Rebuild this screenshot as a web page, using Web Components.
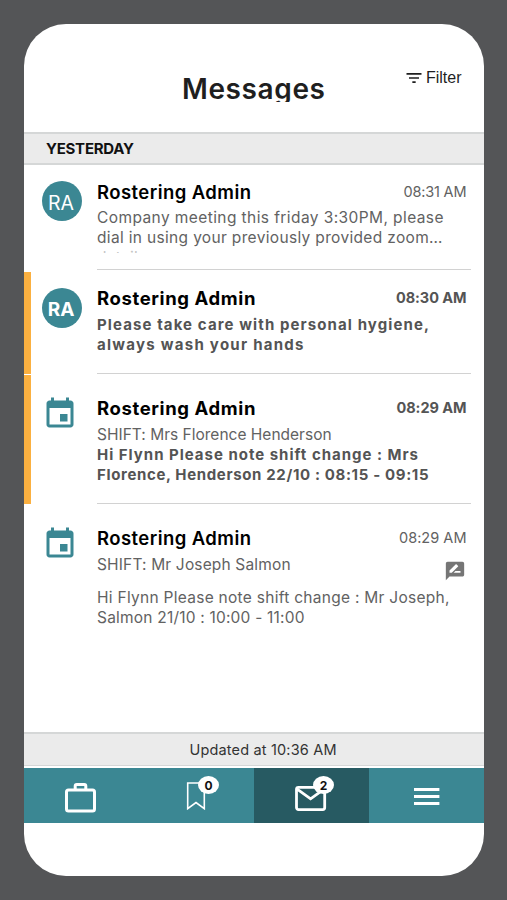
<!DOCTYPE html>
<html lang="en">
<head>
<meta charset="utf-8">
<title>Messages</title>
<style>
  body {
    margin: 0;
    background: #545557;
    font-family: Inter, Roboto, sans-serif;
    color: #626262;
  }
</style>
</head>
<body>
<message-app></message-app>

<script>
// One line of text, tracked so that it spans the given width.
class TextLine extends HTMLElement {
  constructor() {
    super();
    this.attachShadow({ mode: 'open' });
    this.shadowRoot.innerHTML = `
      <style>
        :host { display: block; white-space: nowrap; }
        span { display: inline-block; }
      </style>
      <span><slot></slot></span>
    `;
  }

  connectedCallback() {
    requestAnimationFrame(() => this.fit());
    this.fit();
  }

  fit() {
    const target = Number(this.getAttribute('width'));
    const span = this.shadowRoot.querySelector('span');
    const count = this.textContent.length;
    if (!target || !count) return;
    span.style.letterSpacing = '0px';
    const natural = span.getBoundingClientRect().width;
    const spacing = (target - natural) / (count - 1);
    span.style.letterSpacing = `${spacing.toFixed(3)}px`;
    span.style.marginRight = `${(-spacing).toFixed(3)}px`;
  }
}

// Round initials avatar
class UserAvatar extends HTMLElement {
  constructor() {
    super();
    this.attachShadow({ mode: 'open' });
    this.shadowRoot.innerHTML = `
      <style>
        :host {
          display: flex;
          align-items: center;
          justify-content: center;
          box-sizing: border-box;
          width: 40px;
          height: 40px;
          padding: 4px 1px 0 0;
          border-radius: 50%;
          background: #3b8793;
          color: #fff;
          font-size: 19.5px;
          line-height: 24px;
        }
        :host([bold]) { font-weight: 700; font-size: 19px; }
      </style>
      <slot></slot>
    `;
  }
}

class CalendarIcon extends HTMLElement {
  constructor() {
    super();
    this.attachShadow({ mode: 'open' });
    this.shadowRoot.innerHTML = `
      <style>
        :host { display: block; height: 36px; }
        svg { display: block; fill: #3b8793; }
      </style>
      <svg width="36" height="36" viewBox="0 0 24 24">
        <path d="M17 12h-5v5h5v-5zM16 1v2H8V1H6v2H5c-1.11 0-1.99.9-1.99 2L3 19c0 1.1.89 2 2 2h14c1.1 0 2-.9 2-2V5c0-1.1-.9-2-2-2h-1V1h-2zm3 18H5V8h14v11z"/>
      </svg>
    `;
  }
}

class AppHeader extends HTMLElement {
  constructor() {
    super();
    this.attachShadow({ mode: 'open' });
    this.shadowRoot.innerHTML = `
      <style>
        :host {
          display: grid;
          grid-template-columns: 158px 1fr 142px;
          height: 107.5px;
          color: #1f1f1f;
        }
        .title {
          grid-column: 2;
          margin-top: 49px;
          height: 28.5px;
          overflow: hidden;
          font-size: 28px;
          font-weight: 600;
          line-height: 32px;
        }
        .filter {
          display: flex;
          align-items: center;
          gap: 2.5px;
          height: 20px;
          margin: 44px 0 0 61.5px;
          font: 16px/20px "Liberation Sans", Arial, sans-serif;
        }
        svg { fill: #1f1f1f; }
      </style>
      <div class="title"><text-line width="143">Messages</text-line></div>
      <div class="filter">
        <svg width="20" height="20" viewBox="0 0 24 24"><path d="M10 18h4v-2h-4v2zM3 6v2h18V6H3zm3 7h12v-2H6v2z"/></svg>
        <text-line width="35.5">Filter</text-line>
      </div>
    `;
  }
}

// Grey strip with a border above and below
class InfoBar extends HTMLElement {
  constructor() {
    super();
    this.attachShadow({ mode: 'open' });
    this.shadowRoot.innerHTML = `
      <style>
        :host {
          display: flex;
          align-items: center;
          box-sizing: border-box;
          height: 34px;
          border-top: 2px solid #d5d7d7;
          border-bottom: 2px solid #d5d7d7;
          background: #ebebeb;
          color: #333;
        }
      </style>
      <slot></slot>
    `;
  }
}

class MessageRow extends HTMLElement {
  constructor() {
    super();
    this.attachShadow({ mode: 'open' });
    this.shadowRoot.innerHTML = `
      <style>
        :host {
          display: grid;
          grid-template-columns: 6.5px 66.5px 374px;
          color: #626262;
        }
        :host([unread]) .mark { background: #fbb040; }
        :host([unread]) .time { font-weight: 700; color: #545454; }
        :host([unread]) .name { font-weight: 700; }
        .lead { padding: var(--lead-top, 16px) 0 0 11px; }
        .content {
          box-sizing: border-box;
          padding-top: var(--text-top, 13px);
          border-bottom: 1.5px solid #d2d2d2;
          margin-bottom: var(--line-gap, 0);
        }
        :host([last]) .content { border: 0; }
        .top {
          display: flex;
          justify-content: space-between;
          height: 26px;
          padding-right: 4.5px;
          margin-bottom: var(--name-gap, 4px);
          line-height: 26px;
        }
        .name { font-size: 18.5px; font-weight: 600; color: #000; }
        .time { font-size: 14.5px; }
        .text { font-size: 15.5px; line-height: 20px; }
      </style>
      <div class="mark"></div>
      <div class="lead"><slot name="lead"></slot></div>
      <div class="content">
        <div class="top">
          <div class="name"><slot name="name"></slot></div>
          <div class="time"><slot name="time"></slot></div>
        </div>
        <div class="text"><slot></slot></div>
      </div>
    `;
  }
}

class NavTab extends HTMLElement {
  constructor() {
    super();
    this.attachShadow({ mode: 'open' });
  }

  connectedCallback() {
    const badge = this.getAttribute('badge');
    this.shadowRoot.innerHTML = `
      <style>
        :host {
          display: flex;
          align-items: center;
          justify-content: center;
          padding-left: 1.5px;
          background: #3b8793;
        }
        :host([active]) { background: #275a62; }
        .icon { position: relative; height: 40px; width: 40px; }
        .badge {
          position: absolute;
          left: 20.7px;
          top: 1px;
          width: 21px;
          height: 18px;
          border-radius: 50%;
          background: #fff;
          color: #111;
          font-size: 12px;
          font-weight: 700;
          line-height: 19px;
          text-align: center;
        }
      </style>
      <div class="icon">
        <slot></slot>
        ${badge ? `<div class="badge">${badge}</div>` : ''}
      </div>
    `;
  }
}

class NavBar extends HTMLElement {
  constructor() {
    super();
    this.attachShadow({ mode: 'open' });
    this.shadowRoot.innerHTML = `
      <style>
        :host {
          display: grid;
          grid-template-columns: repeat(4, 1fr);
          height: 55.5px;
        }
        svg { display: block; fill: none; stroke: #fff; }
      </style>
      <nav-tab>
        <svg width="40" height="40" viewBox="0 0 40 40" stroke-width="3">
          <rect x="4.5" y="15" width="28" height="21" rx="2"/>
          <path d="M13.2 15V11.1Q13.2 9.6 14.7 9.6H22.3Q23.8 9.6 23.8 11.1V15"/>
        </svg>
      </nav-tab>
      <nav-tab badge="0">
        <svg width="40" height="40" viewBox="0 0 40 40" stroke-width="1.6">
          <path d="M10.7 8H27.3V33.6L19 27.6L10.7 33.6Z"/>
        </svg>
      </nav-tab>
      <nav-tab badge="2" active>
        <svg width="40" height="40" viewBox="0 0 40 40" stroke-width="2.8">
          <rect x="4.5" y="12.3" width="28.2" height="22.3" rx="2"/>
          <path d="M4.8 13.8L18.6 23.8L32.4 13.8"/>
        </svg>
      </nav-tab>
      <nav-tab>
        <svg width="40" height="40" viewBox="0 0 40 40" stroke-width="3">
          <path d="M7 14.6H32.4M7 21.5H32.4M7 28.4H32.4"/>
        </svg>
      </nav-tab>
    `;
  }
}

class MessageApp extends HTMLElement {
  constructor() {
    super();
    this.attachShadow({ mode: 'open' });
    this.shadowRoot.innerHTML = `
      <style>
        :host {
          display: flex;
          flex-direction: column;
          box-sizing: border-box;
          width: 460px;
          height: 852px;
          margin: 24.2px 0 0 24px;
          border-radius: 42px;
          background: #fff;
          overflow: hidden;
        }
        .day {
          height: 33.5px;
          padding-left: 22px;
          color: #111;
          font-size: 15px;
          font-weight: 700;
        }
        .list { flex: 1; }
        .r1 { height: 106.5px; --line-gap: 1.5px; --text-top: 14px; --name-gap: 3px; }
        .r1 .rest { height: 5px; overflow: hidden; color: #c4c4c4; }
        .r2 { height: 102px; }
        .r3 { height: 129px; margin-top: 1px; --text-top: 20px; --lead-top: 21px; }
        .r4 { height: 150px; --text-top: 21px; --lead-top: 22px; }
        .bold { font-size: 15px; font-weight: 700; color: #545454; }
        .shift {
          display: flex;
          justify-content: space-between;
          height: 33px;
          padding-right: 5px;
        }
        .shift svg { margin-top: 5px; fill: #757575; }
        .updated {
          justify-content: center;
          padding-left: 18px;
          font-size: 14.5px;
          border-bottom-width: 1.5px;
          margin-bottom: 1.5px;
        }
        .home { height: 53px; }
      </style>
      <app-header></app-header>
      <info-bar class="day"><text-line width="88">YESTERDAY</text-line></info-bar>
      <div class="list">
        <message-row class="r1">
          <user-avatar slot="lead">RA</user-avatar>
          <text-line slot="name" width="154">Rostering Admin</text-line>
          <text-line slot="time" width="63">08:31 AM</text-line>
          <text-line width="346.5">Company meeting this friday 3:30PM, please</text-line>
          <text-line width="345.5">dial in using your previously provided zoom…</text-line>
          <div class="rest"><text-line width="49">details</text-line></div>
        </message-row>
        <message-row class="r2" unread>
          <user-avatar slot="lead" bold>RA</user-avatar>
          <text-line slot="name" width="158.5">Rostering Admin</text-line>
          <text-line slot="time" width="70.5">08:30 AM</text-line>
          <text-line class="bold" width="332">Please take care with personal hygiene,</text-line>
          <text-line class="bold" width="206.5">always wash your hands</text-line>
        </message-row>
        <message-row class="r3" unread>
          <calendar-icon slot="lead"></calendar-icon>
          <text-line slot="name" width="158.5">Rostering Admin</text-line>
          <text-line slot="time" width="70">08:29 AM</text-line>
          <text-line width="234.5">SHIFT: Mrs Florence Henderson</text-line>
          <text-line class="bold" width="321">Hi Flynn Please note shift change : Mrs</text-line>
          <text-line class="bold" width="331.5">Florence, Henderson 22/10 : 08:15 - 09:15</text-line>
        </message-row>
        <message-row class="r4" last>
          <calendar-icon slot="lead"></calendar-icon>
          <text-line slot="name" width="154">Rostering Admin</text-line>
          <text-line slot="time" width="67.5">08:29 AM</text-line>
          <div class="shift">
            <text-line width="193.5">SHIFT: Mr Joseph Salmon</text-line>
            <svg width="22" height="22" viewBox="0 0 24 24"><path d="M20 2H4c-1.1 0-1.99.9-1.99 2L2 22l4-4h14c1.1 0 2-.9 2-2V4c0-1.1-.9-2-2-2zM6 14v-2.47l6.88-6.88c.2-.2.51-.2.71 0l1.77 1.77c.2.2.2.51 0 .71L8.47 14H6zm12 0h-7.5l2-2H18v2z"/></svg>
          </div>
          <text-line width="352.5">Hi Flynn Please note shift change : Mr Joseph,</text-line>
          <text-line width="207.5">Salmon 21/10 : 10:00 - 11:00</text-line>
        </message-row>
      </div>
      <info-bar class="updated"><text-line width="147">Updated at 10:36 AM</text-line></info-bar>
      <nav-bar></nav-bar>
      <div class="home"></div>
    `;
  }
}

customElements.define('text-line', TextLine);
customElements.define('user-avatar', UserAvatar);
customElements.define('calendar-icon', CalendarIcon);
customElements.define('app-header', AppHeader);
customElements.define('info-bar', InfoBar);
customElements.define('message-row', MessageRow);
customElements.define('nav-tab', NavTab);
customElements.define('nav-bar', NavBar);
customElements.define('message-app', MessageApp);
</script>
</body>
</html>
